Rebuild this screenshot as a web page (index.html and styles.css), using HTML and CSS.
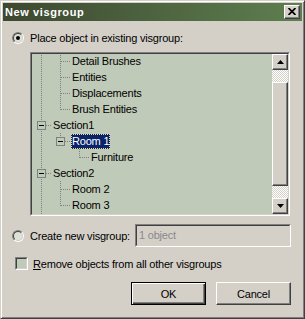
FILE: index.html
```html
<!DOCTYPE html>
<html lang="en">
<head>
  <meta charset="UTF-8" />
  <link rel="stylesheet" href="styles.css">
</head>
<body>
  <div class="window">
    <div class="titlebar">
      <span class="title-text">New visgroup</span>
      <span class="close raised">
        <svg width="8" height="7" viewBox="0 0 8 7"><path d="M0.5 0l7 7M7.5 0l-7 7" stroke="#000" stroke-width="1.7"/></svg>
      </span>
    </div>

    <div class="content">
      <div class="option">
        <span class="radio"><span class="radio-in on"></span></span>
        <span class="opt-label">Place object in existing visgroup:</span>
      </div>

      <div class="tree">
        <div class="tree-in">
          <div class="tree-list">
            <div class="rows">
              <div class="row"><span class="g g-line"></span><span class="g g-tee"></span><span class="label">Detail Brushes</span></div>
              <div class="row"><span class="g g-line"></span><span class="g g-tee"></span><span class="label">Entities</span></div>
              <div class="row"><span class="g g-line"></span><span class="g g-tee"></span><span class="label">Displacements</span></div>
              <div class="row"><span class="g g-line"></span><span class="g g-end"></span><span class="label">Brush Entities</span></div>
              <div class="row"><span class="g g-box"><span class="box"></span></span><span class="label">Section1</span></div>
              <div class="row"><span class="g g-line"></span><span class="g g-boxend"><span class="box"></span></span><span class="label sel">Room 1</span></div>
              <div class="row"><span class="g g-line"></span><span class="g"></span><span class="g g-end"></span><span class="label">Furniture</span></div>
              <div class="row"><span class="g g-box"><span class="box"></span></span><span class="label">Section2</span></div>
              <div class="row"><span class="g g-line"></span><span class="g g-tee"></span><span class="label">Room 2</span></div>
              <div class="row"><span class="g g-line"></span><span class="g g-end"></span><span class="label">Room 3</span></div>
              <div class="row"><span class="g g-line"></span></div>
            </div>
          </div>
          <div class="scroll">
            <span class="sb-btn raised">
              <svg width="7" height="4" viewBox="0 0 7 4"><path d="M3.5 0L7 4H0z" fill="#000"/></svg>
            </span>
            <span class="sb-thumb raised"></span>
            <span class="sb-btn raised">
              <svg width="7" height="4" viewBox="0 0 7 4"><path d="M0 0H7L3.5 4z" fill="#000"/></svg>
            </span>
          </div>
        </div>
      </div>

      <div class="option option-new">
        <span class="radio"><span class="radio-in"></span></span>
        <span class="opt-label">Create new visgroup:</span>
        <div class="field"><div class="field-in">1 object</div></div>
      </div>

      <div class="check-row">
        <span class="check"><span class="check-in"></span></span>
        <span class="opt-label"><u>R</u>emove objects from all other visgroups</span>
      </div>

      <div class="buttons">
        <button class="btn default">OK</button>
        <button class="btn">Cancel</button>
      </div>
    </div>
  </div>
</body>
</html>
```

FILE: styles.css
```css
body {
  margin: 0;
  font-family: "Liberation Sans", Arial, sans-serif;
  font-size: 11px;
  letter-spacing: -0.2px;
  color: #000;
  background: #d4d0c8;
}

.window {
  width: 305px;
  height: 319px;
  box-sizing: border-box;
  border: 1px solid;
  border-color: #d4d0c8 #404040 #404040 #d4d0c8;
  box-shadow: inset 1px 1px #fff, inset -1px -1px #808080;
  padding: 2px;
  background: #d4d0c8;
  display: flex;
  flex-direction: column;
}

.titlebar {
  height: 18px;
  flex: none;
  display: flex;
  align-items: center;
  justify-content: space-between;
  padding: 0 2px;
  background: linear-gradient(to right, #3c4830, #5e7f4f);
}

.title-text {
  color: #fff;
  font-weight: bold;
  font-size: 11px;
  letter-spacing: 0.6px;
}

.raised {
  box-sizing: border-box;
  border: 1px solid;
  border-color: #fff #404040 #404040 #fff;
  box-shadow: inset -1px -1px #808080;
  background: #d4d0c8;
}

.close {
  width: 16px;
  height: 14px;
  display: flex;
  align-items: center;
  justify-content: center;
}

.close svg {
  margin: 0 1px 1px 0;
}

.content {
  flex: 1;
  padding: 10px 11px 0 9px;
  display: flex;
  flex-direction: column;
}

.option {
  display: flex;
  align-items: center;
  height: 13px;
}

.opt-label {
  white-space: nowrap;
}

.radio {
  width: 12px;
  height: 12px;
  flex: none;
  margin-right: 6px;
  box-sizing: border-box;
  border-radius: 50%;
  border: 1px solid;
  border-color: #808080 #fff #fff #808080;
}

.radio-in {
  display: flex;
  align-items: center;
  justify-content: center;
  height: 100%;
  box-sizing: border-box;
  border-radius: 50%;
  border: 1px solid;
  border-color: #404040 #d4d0c8 #d4d0c8 #404040;
  background: #dde2d8;
}

.radio-in.on::after {
  content: "";
  width: 4px;
  height: 4px;
  border-radius: 50%;
  background: #000;
}

/* tree view */
.tree {
  margin: 8px 0 0 18px;
  width: 260px;
  height: 164px;
  box-sizing: border-box;
  border: 1px solid;
  border-color: #808080 #fff #fff #808080;
}

.tree-in {
  height: 100%;
  box-sizing: border-box;
  border: 1px solid;
  border-color: #404040 #d4d0c8 #d4d0c8 #404040;
  display: flex;
}

.tree-list {
  flex: 1;
  overflow: hidden;
  background: #c0cab8;
}

.rows {
  margin-top: -1px;
}

.row {
  display: flex;
  height: 16px;
}

.g {
  width: 19px;
  flex: none;
}

.g-line {
  background: repeating-linear-gradient(#808080 0 1px, transparent 1px 2px) 9px 0 / 1px 16px no-repeat;
}

.g-tee {
  background:
    repeating-linear-gradient(to right, #808080 0 1px, transparent 1px 2px) 10px 8px / 9px 1px no-repeat,
    repeating-linear-gradient(#808080 0 1px, transparent 1px 2px) 9px 0 / 1px 16px no-repeat;
}

.g-end {
  background:
    repeating-linear-gradient(to right, #808080 0 1px, transparent 1px 2px) 10px 8px / 9px 1px no-repeat,
    repeating-linear-gradient(#808080 0 1px, transparent 1px 2px) 9px 0 / 1px 9px no-repeat;
}

.g-box {
  background:
    repeating-linear-gradient(to right, #808080 0 1px, transparent 1px 2px) 14px 8px / 5px 1px no-repeat,
    repeating-linear-gradient(#808080 0 1px, transparent 1px 2px) 9px 0 / 1px 16px no-repeat;
}

.g-boxend {
  background:
    repeating-linear-gradient(to right, #808080 0 1px, transparent 1px 2px) 14px 8px / 5px 1px no-repeat,
    repeating-linear-gradient(#808080 0 1px, transparent 1px 2px) 9px 0 / 1px 4px no-repeat;
}

.box {
  display: block;
  width: 9px;
  height: 9px;
  box-sizing: border-box;
  margin: 4px 0 0 5px;
  border: 1px solid #808080;
  background: linear-gradient(#000, #000) center / 5px 1px no-repeat, #c0cab8;
}

.label {
  margin-left: 1px;
  padding: 0 1px;
  height: 15px;
  line-height: 15px;
  align-self: center;
  white-space: nowrap;
}

.label.sel {
  background: #0a246a;
  color: #fff;
  outline: 1px dotted #f5db95;
  outline-offset: -1px;
}

.scroll {
  width: 16px;
  flex: none;
  display: flex;
  flex-direction: column;
  background: repeating-conic-gradient(#fff 0 25%, #d4d0c8 0 50%) 0 0 / 2px 2px;
}

.sb-btn {
  height: 16px;
  flex: none;
  display: flex;
  align-items: center;
  justify-content: center;
}

.sb-thumb {
  flex: 1;
  margin: 12px 0;
}

/* create new row */
.option-new {
  margin-top: 8px;
  height: 23px;
}

.field {
  margin-left: auto;
  width: 156px;
  height: 23px;
  flex: none;
  box-sizing: border-box;
  border: 1px solid;
  border-color: #808080 #fff #fff #808080;
}

.field-in {
  height: 100%;
  box-sizing: border-box;
  border: 1px solid;
  border-color: #404040 #d4d0c8 #d4d0c8 #404040;
  padding: 1px 2px 0;
  line-height: 16px;
  color: #8a8a8a;
}

.check-row {
  margin: 10px 0 0 3px;
  height: 13px;
  display: flex;
  align-items: center;
  gap: 5px;
}

.check {
  width: 13px;
  height: 13px;
  flex: none;
  box-sizing: border-box;
  border: 1px solid;
  border-color: #808080 #fff #fff #808080;
}

.check-in {
  display: block;
  height: 100%;
  box-sizing: border-box;
  border: 1px solid;
  border-color: #404040 #d4d0c8 #d4d0c8 #404040;
  background: #c0cab8;
}

.buttons {
  margin-top: 12px;
  display: flex;
  justify-content: flex-end;
  gap: 10px;
}

.btn {
  width: 75px;
  height: 23px;
  padding: 0;
  font: inherit;
  letter-spacing: inherit;
  color: #000;
  box-sizing: border-box;
  border: 1px solid;
  border-color: #fff #404040 #404040 #fff;
  box-shadow: inset -1px -1px #808080;
  background: #d4d0c8;
}

.btn.default {
  border-color: #000;
  box-shadow: inset 1px 1px #fff, inset -1px -1px #404040, inset -2px -2px #808080;
}
```
